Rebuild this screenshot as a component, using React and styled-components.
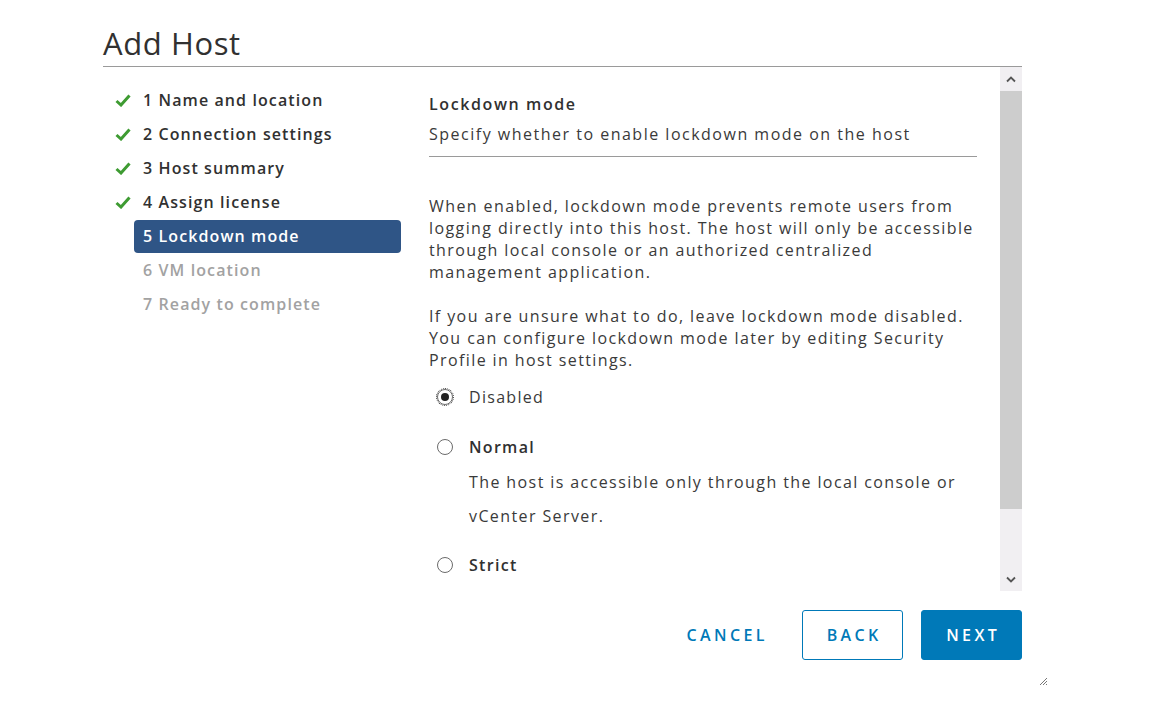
import React from 'react'
import styled, { createGlobalStyle } from 'styled-components'

const GlobalStyle = createGlobalStyle`
    body {
        margin: 0;
        background: #fff;
        font-family: "Open Sans", "Noto Sans", sans-serif;
        color: #3a3a3a;
    }
`

const Page = styled.div`
    padding: 24px 0 0 103px;
    width: 945px;
`

const Title = styled.h1`
    margin: 0;
    font-size: 31px;
    font-weight: 400;
    letter-spacing: 0.6px;
    color: #313131;
    line-height: 38px;
    height: 42px;
    border-bottom: 1px solid #9a9a9a;
    width: 919px;
`

const Body = styled.div`
    display: flex;
    width: 919px;
    height: 524px;
`

const Nav = styled.ul`
    list-style: none;
    margin: 0;
    padding: 16px 0 0 12px;
    width: 298px;
    box-sizing: border-box;
`

const Step = styled.li`
    display: flex;
    align-items: center;
    height: 34px;
`

const Check = styled.span`
    width: 19px;
    display: flex;
    align-items: center;
`

const StepLabel = styled.span`
    flex: 1;
    height: 33px;
    display: flex;
    align-items: center;
    padding: 0 9px;
    border-radius: 4px;
    font-size: 16px;
    font-weight: 600;
    letter-spacing: 1.1px;
    white-space: nowrap;
    color: ${p => (p.$active ? '#fff' : p.$pending ? '#a2a2a2' : '#313131')};
    background: ${p => (p.$active ? '#2f5586' : 'transparent')};
`

const Content = styled.div`
    flex: 1;
    padding: 22px 23px 0 28px;
    overflow: hidden;
`

const Heading = styled.div`
    font-size: 16px;
    font-weight: 600;
    letter-spacing: 1.6px;
    color: #313131;
    line-height: 30px;
`

const Sub = styled.div`
    font-size: 16px;
    letter-spacing: 1.5px;
    line-height: 30px;
    padding-bottom: 7px;
    border-bottom: 1px solid #9a9a9a;
    margin-bottom: 38px;
    white-space: nowrap;
`

const Para = styled.p`
    margin: 0 0 22px;
    font-size: 16px;
    letter-spacing: 1.4px;
    line-height: 22px;
    white-space: nowrap;
`

const Option = styled.div`
    display: flex;
    align-items: center;
    height: 30px;
    margin-top: ${p => p.$top || 0}px;
    font-size: 16px;
    letter-spacing: 1.3px;
    font-weight: ${p => (p.$bold ? 600 : 400)};
    color: ${p => (p.$bold ? '#313131' : '#3a3a3a')};
`

const Radio = styled.span`
    width: 16px;
    height: 16px;
    box-sizing: border-box;
    border-radius: 50%;
    border: 1px solid #6b6b6b;
    margin: 0 16px 0 8px;
    display: flex;
    align-items: center;
    justify-content: center;
    outline: ${p => (p.$focus ? '1px dotted #333' : 'none')};
    outline-offset: 0;
    &::after {
        content: '';
        width: 8px;
        height: 8px;
        border-radius: 50%;
        background: ${p => (p.$checked ? '#222' : 'transparent')};
    }
`

const Desc = styled.div`
    padding-left: 40px;
    font-size: 16px;
    letter-spacing: 1.4px;
    line-height: 34px;
    margin-top: 3px;
    white-space: nowrap;
`

const Scrollbar = styled.div`
    width: 22px;
    display: flex;
    flex-direction: column;
    background: #f1eff2;
`

const Arrow = styled.div`
    height: 24px;
    display: flex;
    align-items: center;
    justify-content: center;
`

const Thumb = styled.div`
    height: 418px;
    background: #cdcdcd;
`

const Track = styled.div`
    flex: 1;
`

const Footer = styled.div`
    display: flex;
    justify-content: flex-end;
    gap: 18px;
    width: 919px;
    margin-top: 19px;
`

const Button = styled.button`
    width: 101px;
    height: 50px;
    padding: 0;
    box-sizing: border-box;
    border-radius: 3px;
    font-family: "Open Sans", "Noto Sans", sans-serif;
    font-size: 16px;
    font-weight: 600;
    letter-spacing: 3.4px;
    text-indent: 3.4px;
    border: 1px solid ${p => (p.$variant === 'flat' ? 'transparent' : '#0079b8')};
    background: ${p => (p.$variant === 'primary' ? '#0079b8' : '#fff')};
    color: ${p => (p.$variant === 'primary' ? '#fff' : '#0079b8')};
    margin-right: ${p => (p.$variant === 'flat' ? '8px' : '0')};
`

const Grip = styled.div`
    display: flex;
    justify-content: flex-end;
    padding: 17px 0 0;
    width: 945px;
`

const CheckIcon = () => (
    <svg width="16" height="13" viewBox="0 0 16 13">
        <path d="M1.5 7 L6 11 L14.5 1.5" fill="none" stroke="#3e9b32" strokeWidth="3" />
    </svg>
)

const Caret = ({ down }) => (
    <svg width="10" height="7" viewBox="0 0 10 7">
        <path d={down ? 'M1 1.5 L5 5.5 L9 1.5' : 'M1 5.5 L5 1.5 L9 5.5'} fill="none" stroke="#555" strokeWidth="1.8" />
    </svg>
)

const GripIcon = () => (
    <svg width="9" height="9" viewBox="0 0 9 9">
        <path d="M8 1 L1 8 M8 4 L4 8 M8 7 L7 8" stroke="#777" strokeWidth="1" />
    </svg>
)

const steps = [
    { label: '1 Name and location', done: true },
    { label: '2 Connection settings', done: true },
    { label: '3 Host summary', done: true },
    { label: '4 Assign license', done: true },
    { label: '5 Lockdown mode', active: true },
    { label: '6 VM location', pending: true },
    { label: '7 Ready to complete', pending: true },
]

const App = () => {
    return (
        <Page>
            <GlobalStyle />
            <Title>Add Host</Title>
            <Body>
                <Nav>
                    {steps.map(s => (
                        <Step key={s.label}>
                            <Check>{s.done && <CheckIcon />}</Check>
                            <StepLabel $active={s.active} $pending={s.pending}>{s.label}</StepLabel>
                        </Step>
                    ))}
                </Nav>
                <Content>
                    <Heading>Lockdown mode</Heading>
                    <Sub>Specify whether to enable lockdown mode on the host</Sub>
                    <Para>
                        When enabled, lockdown mode prevents remote users from<br />
                        logging directly into this host. The host will only be accessible<br />
                        through local console or an authorized centralized<br />
                        management application.
                    </Para>
                    <Para>
                        If you are unsure what to do, leave lockdown mode disabled.<br />
                        You can configure lockdown mode later by editing Security<br />
                        Profile in host settings.
                    </Para>
                    <Option $top={-11}><Radio $checked $focus />Disabled</Option>
                    <Option $bold $top={20}><Radio />Normal</Option>
                    <Desc>
                        The host is accessible only through the local console or<br />
                        vCenter Server.
                    </Desc>
                    <Option $bold $top={17}><Radio />Strict</Option>
                </Content>
                <Scrollbar>
                    <Arrow><Caret /></Arrow>
                    <Thumb />
                    <Track />
                    <Arrow><Caret down /></Arrow>
                </Scrollbar>
            </Body>
            <Footer>
                <Button $variant="flat">CANCEL</Button>
                <Button>BACK</Button>
                <Button $variant="primary">NEXT</Button>
            </Footer>
            <Grip><GripIcon /></Grip>
        </Page>
    )
}

export default App
